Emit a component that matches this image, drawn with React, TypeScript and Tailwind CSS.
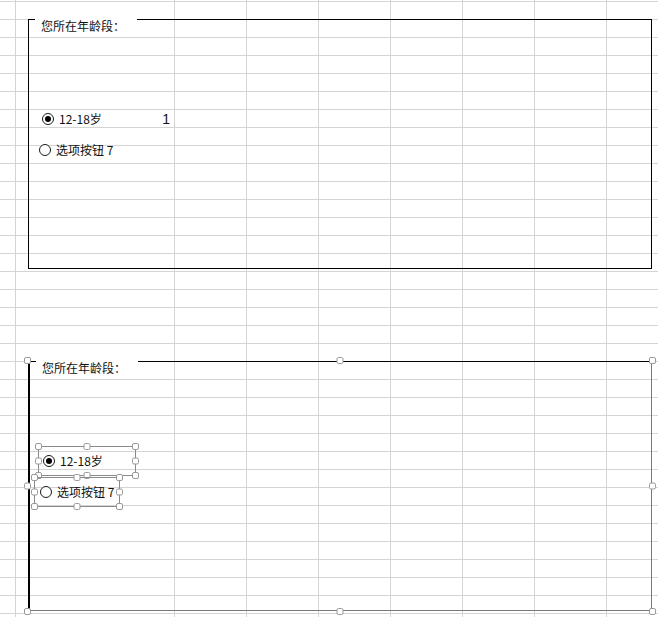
import React from 'react';

// column widths of the sheet (first is the row-header gutter)
const COLS = [16, 159, 72, 72, 72, 72, 72, 72, 72];
const ROW_COUNT = 35;

const Handle: React.FC<{ pos: string }> = ({ pos }) => (
  <span className={`absolute w-[7px] h-[7px] rounded-[2px] border border-[#9a9a9a] bg-white ${pos}`} />
);

// 8 resize handles around a selected object
const Handles: React.FC = () => (
  <>
    <Handle pos="-left-[4px] -top-[4px]" />
    <Handle pos="left-1/2 -translate-x-1/2 -top-[4px]" />
    <Handle pos="-right-[4px] -top-[4px]" />
    <Handle pos="-left-[4px] top-1/2 -translate-y-1/2" />
    <Handle pos="-right-[4px] top-1/2 -translate-y-1/2" />
    <Handle pos="-left-[4px] -bottom-[4px]" />
    <Handle pos="left-1/2 -translate-x-1/2 -bottom-[4px]" />
    <Handle pos="-right-[4px] -bottom-[4px]" />
  </>
);

interface RadioProps {
  label: string;
  checked?: boolean;
  selected?: boolean;
  className: string;
}

const Radio: React.FC<RadioProps> = ({ label, checked, selected, className }) => (
  <div
    className={`absolute h-[30px] flex items-center gap-[5px] border ${selected ? 'border-[#8a8a8a]' : 'border-transparent'} ${className}`}
  >
    <span className="w-[12px] h-[12px] shrink-0 rounded-full border border-[#1a1a1a] bg-white flex items-center justify-center">
      {checked && <span className="w-[6px] h-[6px] rounded-full bg-black" />}
    </span>
    <span className="text-[12px] leading-[14px] text-[#111] whitespace-nowrap">{label}</span>
    {selected && <Handles />}
  </div>
);

const GroupBox: React.FC<{ selected?: boolean; className: string }> = ({ selected, className }) => (
  <div
    className={`absolute w-[624px] border-t border-black ${
      selected
        ? 'left-[28px] border-l-2 border-r border-b border-r-[#7a7a7a] border-b-[#7a7a7a]'
        : 'left-[28px] border-l border-r border-b'
    } ${className}`}
  >
    {/* caption sits over the top border */}
    <span className="absolute left-[6px] -top-[1px] w-[102px] pl-[6px] bg-white text-[12px] leading-[14px] text-[#111] whitespace-nowrap">
      您所在年龄段：
    </span>

    <Radio label="12-18岁" checked selected={selected} className="left-[8px] top-[84px] w-[98px] pl-[4px]" />
    <Radio label="选项按钮 7" selected={selected} className="left-[4px] top-[115px] w-[86px] pl-[5px]" />

    {selected && (
      <div className="absolute -left-[2px] -top-[1px] -right-[1px] -bottom-[1px]">
        <Handles />
      </div>
    )}
  </div>
);

export default function App() {
  return (
    <div className="relative w-[658px] h-[617px] overflow-hidden bg-white font-['Microsoft_YaHei','Noto_Sans_CJK_SC',sans-serif]">
      {/* worksheet grid */}
      <div className="flex flex-col">
        <div className="flex h-[2px]">
          {COLS.map((w, c) => (
            <div key={c} className="shrink-0 h-full border-r border-b border-[#d4d4d4]" style={{ width: w }} />
          ))}
        </div>
        {Array.from({ length: ROW_COUNT }).map((_, r) => (
          <div key={r} className="flex h-[18px]">
            {COLS.map((w, c) => (
              <div
                key={c}
                className="shrink-0 h-full border-r border-b border-[#d4d4d4] flex items-center justify-end pr-[4px]"
                style={{ width: w }}
              >
                {r === 6 && c === 1 && (
                  <span className="font-['Liberation_Sans',sans-serif] text-[14px] leading-[16px] text-[#111]">1</span>
                )}
              </div>
            ))}
          </div>
        ))}
      </div>

      {/* form controls floating on the sheet */}
      <GroupBox className="top-[19px] h-[250px]" />
      <GroupBox selected className="top-[361px] h-[250px]" />
    </div>
  );
}
